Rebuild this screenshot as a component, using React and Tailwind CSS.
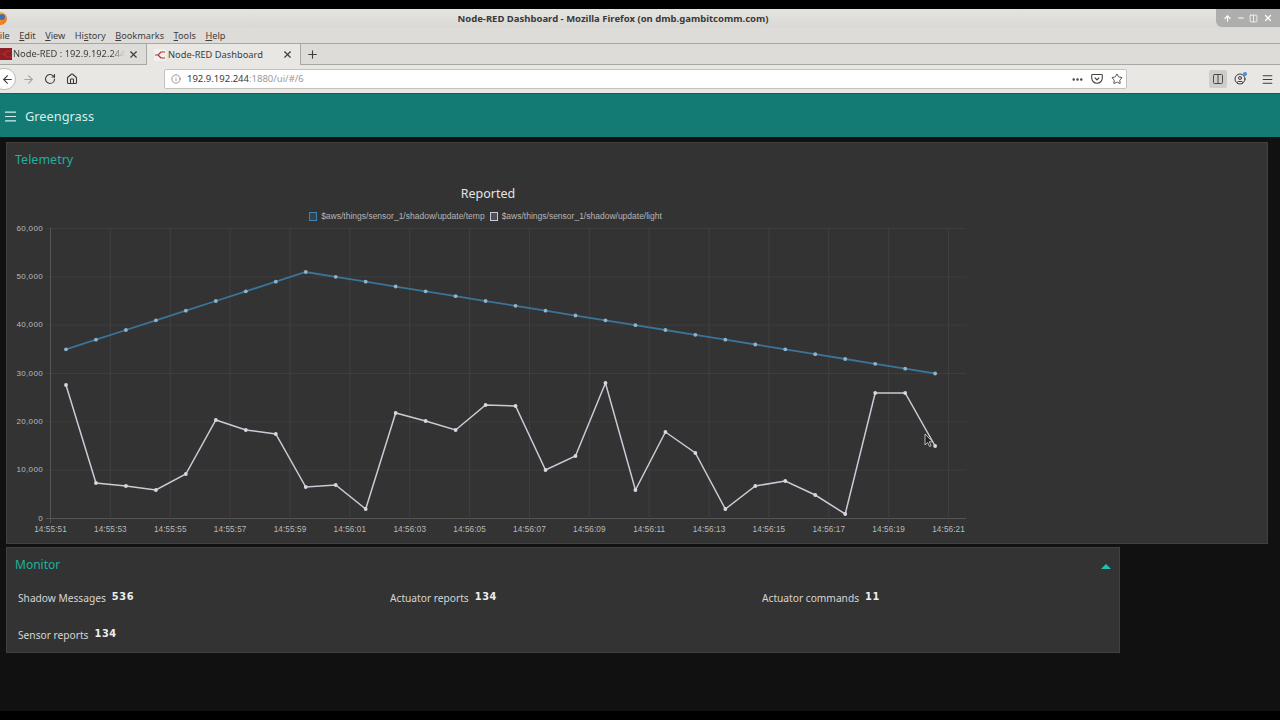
// App.jsx — Firefox window showing a Node-RED dashboard.
import { ArrowLeft, ArrowRight, RotateCw, Home, Info, Ellipsis, Star, Menu, X, Plus, Minus, ArrowUp, CircleUser, Columns2 } from 'lucide-react';

const UI = "font-['Noto_Sans',sans-serif]";

const temp = [35, 37, 39, 41, 43, 45, 47, 49, 51, 50, 49, 48, 47, 46, 45, 44, 43, 42, 41, 40, 39, 38, 37, 36, 35, 34, 33, 32, 31, 30];
const lightY = [385, 483, 486, 490, 474, 420, 430, 434, 487, 485, 509, 413, 421, 430, 405, 406, 470, 456, 383, 490, 432, 453, 509, 486, 481, 495, 514, 393, 393, 446];
const px = (i) => 66 + i * 29.97;
const tempY = (v) => 518.5 - v * 4.833;
const ticks = ['14:55:51', '14:55:53', '14:55:55', '14:55:57', '14:55:59', '14:56:01', '14:56:03', '14:56:05', '14:56:07', '14:56:09', '14:56:11', '14:56:13', '14:56:15', '14:56:17', '14:56:19', '14:56:21'];
const yTicks = ['0', '10,000', '20,000', '30,000', '40,000', '50,000', '60,000'];

function NodeRedIcon({ tint }) {
  return (
    <svg width="12" height="12" viewBox="0 0 12 12" className="shrink-0">
      <rect width="12" height="12" fill={tint} />
      <path d="M1 6h3l3-3h4M4 6l3 3h4" fill="none" stroke="#a33" strokeWidth="1.2" />
    </svg>
  );
}

function Chart() {
  return (
    <svg width="1000" height="321" viewBox="0 222 1000 321" className="block font-['Liberation_Sans',sans-serif]">
      {yTicks.map((t, i) => (
        <g key={t}>
          <line x1="46" x2="966" y1={518.5 - i * 48.33} y2={518.5 - i * 48.33} stroke={i === 0 ? '#565656' : '#3e3e3e'} />
          <text x="43" y={520.5 - i * 48.33} textAnchor="end" fontSize="8" letterSpacing="0.35" fill="#bababa">{t}</text>
        </g>
      ))}
      {ticks.map((t, i) => (
        <g key={t}>
          <line x1={50.5 + i * 59.87} x2={50.5 + i * 59.87} y1="228" y2="523" stroke={i === 0 ? '#565656' : '#404040'} />
          <text x={50.5 + i * 59.87} y="532" textAnchor="middle" fontSize="8.2" letterSpacing="0.1" fill="#bababa">{t}</text>
        </g>
      ))}
      <polyline points={temp.map((v, i) => `${px(i)},${tempY(v)}`).join(' ')} fill="none" stroke="#3a7499" strokeWidth="1.8" />
      {temp.map((v, i) => (
        <circle key={i} cx={px(i)} cy={tempY(v)} r="1.9" fill="#8fb5cc" />
      ))}
      <polyline points={lightY.map((y, i) => `${px(i)},${y}`).join(' ')} fill="none" stroke="#c9cbd6" strokeWidth="1.5" />
      {lightY.map((y, i) => (
        <circle key={i} cx={px(i)} cy={y} r="1.9" fill="#d8d8de" />
      ))}
      {/* mouse pointer */}
      <path d="M925 434v11l2.6-2.4 2 4 1.6-.8-2-4h3.4z" fill="#222" stroke="#ddd" strokeWidth="0.8" />
    </svg>
  );
}

function Legend({ color, label }) {
  return (
    <span className="flex items-center gap-[4px]">
      <span className="h-[9px] w-[8px] border" style={{ borderColor: color, backgroundColor: `${color}33` }} />
      {label}
    </span>
  );
}

function Stat({ label, value }) {
  return (
    <div className="flex h-[18px] items-center gap-[6px]">
      <span className="text-[10.2px] text-[#d6d6d6]">{label}</span>
      <b className="-mt-[3px] font-['DejaVu_Sans',sans-serif] text-[9.8px] tracking-[0.6px] text-[#eeeeee]">{value}</b>
    </div>
  );
}

export default function App() {
  return (
    <div className={`flex h-[720px] w-[1280px] flex-col overflow-hidden bg-black ${UI}`}>
      <div className="h-[9px] shrink-0 bg-black" />

      {/* title bar */}
      <div className="relative flex h-[19px] shrink-0 items-center justify-center bg-gradient-to-b from-[#e6e4e1] to-[#dad8d4] pt-[2px] text-[9.5px] font-bold text-[#3a3a3a]">
        <span className="mr-[54px]">Node-RED Dashboard - Mozilla Firefox (on dmb.gambitcomm.com)</span>
        <span className="absolute -left-[6px] top-[3px] flex h-[13px] w-[13px] items-center justify-center rounded-full bg-gradient-to-br from-[#ffcb2d] to-[#e8601c]">
          <span className="ml-[3px] mt-[-3px] h-[6px] w-[6px] rounded-full bg-[#3f6fb5]" />
        </span>
        <div className="absolute right-0 top-0 flex h-[18px] w-[64px] items-center justify-around rounded-bl-[6px] bg-[#aeaeac] px-[5px] text-white">
          <ArrowUp size={9} strokeWidth={3} />
          <Minus size={8} strokeWidth={3} />
          <Columns2 size={9} strokeWidth={2} />
          <X size={10} strokeWidth={3} />
        </div>
      </div>

      {/* menu bar */}
      <div className="flex h-[15px] shrink-0 items-center gap-[9.5px] bg-[#dedcd8] text-[9.2px] text-[#3c3c3c]">
        <span className="-ml-[5px]"><u>F</u>ile</span>
        <span><u>E</u>dit</span>
        <span><u>V</u>iew</span>
        <span>Hi<u>s</u>tory</span>
        <span><u>B</u>ookmarks</span>
        <span><u>T</u>ools</span>
        <span><u>H</u>elp</span>
      </div>

      {/* tabs */}
      <div className="flex h-[22px] shrink-0 items-stretch border-y border-[#a9a7a3] bg-[#dedcd8] text-[9.3px] text-[#3c3c3c]">
        <div className="flex w-[146px] items-center pr-[7px]">
          <NodeRedIcon tint="#8f1d25" />
          <span className="ml-[1px] w-[112px] overflow-hidden whitespace-nowrap [mask-image:linear-gradient(to_right,black_88%,transparent)]">Node-RED : 192.9.192.244</span>
          <X size={11} strokeWidth={2.5} className="ml-auto" />
        </div>
        <div className="-mb-px flex w-[155px] items-center border-x border-[#a9a7a3] bg-[#e9e7e4] px-[7px]">
          <NodeRedIcon tint="#f1f0ee" />
          <span className="ml-[2px]">Node-RED Dashboard</span>
          <X size={11} strokeWidth={2.5} className="ml-auto" />
        </div>
        <div className="flex w-[22px] items-center justify-center">
          <Plus size={13} strokeWidth={2} />
        </div>
      </div>

      {/* nav bar */}
      <div className="flex h-[28px] shrink-0 items-center bg-[#e9e7e4] text-[#3c3c3c]">
        <div className="-ml-[8px] flex h-[22px] w-[24px] items-center justify-center rounded-full border border-[#bdbbb7] bg-white pl-[6px]">
          <ArrowLeft size={13} strokeWidth={2} />
        </div>
        <ArrowRight size={13} strokeWidth={2} className="ml-[6px] text-[#a5a5a3]" />
        <RotateCw size={12} strokeWidth={2.2} className="ml-[9px]" />
        <Home size={12} strokeWidth={2.2} className="ml-[10px]" />
        <div className="ml-[86px] flex h-[20px] w-[963px] items-center rounded-[2px] border border-[#c4c2be] bg-white pl-[6px] pr-[3px] text-[9.5px]">
          <Info size={10} strokeWidth={1.6} className="text-[#666]" />
          <span className="ml-[6px] text-[#3a3a3a]">192.9.192.244</span>
          <span className="text-[#999]">:1880/ui/#/6</span>
          <Ellipsis size={13} strokeWidth={2.5} className="ml-auto" />
          <svg width="12" height="12" viewBox="0 0 12 12" className="ml-[7px]">
            <path d="M1.5 1.5h9a.8.8 0 0 1 .8.8V5a5.3 5.3 0 0 1-10.6 0V2.3a.8.8 0 0 1 .8-.8z" fill="none" stroke="#444" strokeWidth="1.1" />
            <path d="M3.8 4.6 6 6.8l2.2-2.2" fill="none" stroke="#444" strokeWidth="1.2" />
          </svg>
          <Star size={12} strokeWidth={1.8} className="ml-[8px]" />
        </div>
        <div className="ml-[82px] flex h-[18px] w-[18px] items-center justify-center rounded-[2px] bg-[#cfcdc9]">
          <Columns2 size={12} strokeWidth={1.8} />
        </div>
        <div className="relative ml-[7px]">
          <CircleUser size={12} strokeWidth={2} />
          <span className="absolute -right-[1px] -top-[1px] h-[4px] w-[4px] rounded-full bg-[#3f8fe0]" />
        </div>
        <Menu size={13} strokeWidth={2} className="ml-[15px]" />
      </div>

      {/* dashboard */}
      <div className="flex h-[618px] flex-col bg-[#111111]">
        <div className="flex h-[44px] shrink-0 items-center border-t border-[#0f615c] bg-[#137a74] pt-[2px] text-[#d4eeea]">
          <Menu size={15} strokeWidth={1.8} className="ml-[3px]" />
          <span className="ml-[7px] text-[12.8px]">Greengrass</span>
        </div>

        <section className="ml-[6px] mt-[5px] h-[402px] w-[1262px] shrink-0 border border-[#414141] bg-[#333333]">
          <h2 className="ml-[8px] mt-[8px] h-[19px] text-[12.5px] text-[#20b09b]">Telemetry</h2>
          <div className="-ml-[7px]">
            <div className="mt-[15px] w-[976px] text-center text-[12.5px] leading-[17px] text-[#e4e4e4]">Reported</div>
            <div className="mt-[9px] flex w-[971px] justify-center gap-[5px] font-['Liberation_Sans',sans-serif] text-[8.5px] leading-[11px] text-[#b5b5b5]">
              <Legend color="#3f84b0" label="$aws/things/sensor_1/shadow/update/temp" />
              <Legend color="#c6c9d6" label="$aws/things/sensor_1/shadow/update/light" />
            </div>
            <Chart />
          </div>
        </section>

        <section className="ml-[6px] mt-[3px] h-[106px] w-[1114px] shrink-0 border border-[#414141] bg-[#333333]">
          <div className="flex h-[33px] items-center justify-between pl-[8px] pr-[8px] pt-[1px]">
            <h2 className="text-[12px] text-[#20b09b]">Monitor</h2>
            <span className="mt-[3px] h-0 w-0 border-x-[5px] border-b-[5px] border-x-transparent border-b-[#1cc4b0]" />
          </div>
          <div className="mt-[9px] grid grid-cols-[372px_372px_1fr] gap-y-[19px] pl-[11px]">
            <Stat label="Shadow Messages" value="536" />
            <Stat label="Actuator reports" value="134" />
            <Stat label="Actuator commands" value="11" />
            <Stat label="Sensor reports" value="134" />
          </div>
        </section>
      </div>
    </div>
  );
}
